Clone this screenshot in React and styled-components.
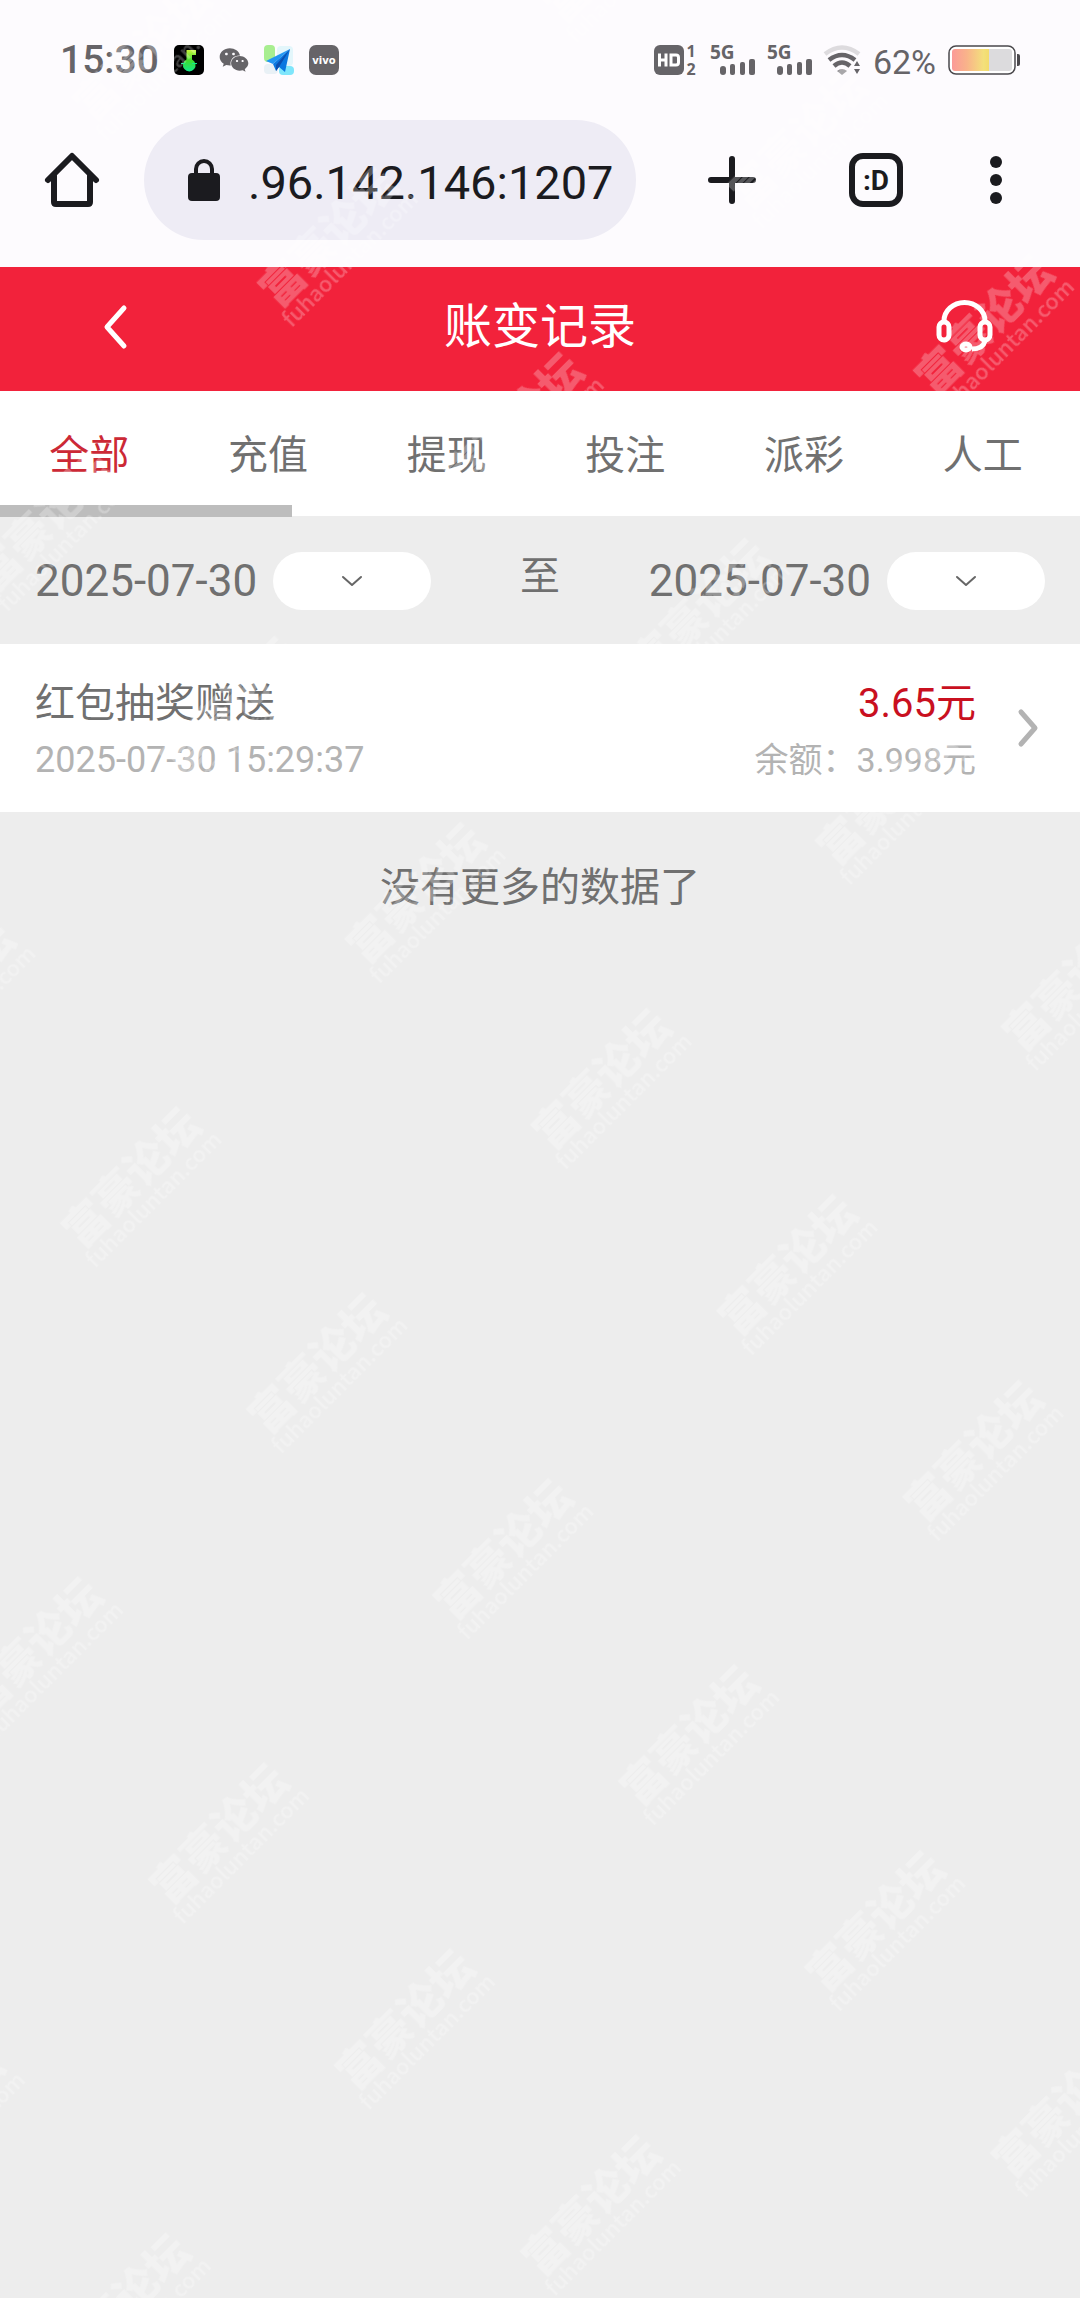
import React, { useState } from 'react';
import styled, { createGlobalStyle } from 'styled-components';
import { FaWeixin } from 'react-icons/fa';

const tabs = ['全部', '充值', '提现', '投注', '派彩', '人工'];

const records = [
    { id: 1, name: '红包抽奖赠送', time: '2025-07-30 15:29:37', amount: '3.65元', balance: '3.998元' },
];

const PlayerIcon = () => (
    <svg width='30' height='30' viewBox='0 0 30 30' aria-hidden='true'>
        <defs>
            <linearGradient id='note' x1='0' y1='0' x2='0' y2='1'>
                <stop offset='0' stopColor='#c8f53c' />
                <stop offset='0.5' stopColor='#3ddc2e' />
                <stop offset='1' stopColor='#12e88c' />
            </linearGradient>
        </defs>
        <rect width='30' height='30' rx='5' fill='#000' />
        <path d='M12.5 5h9.5v5h-4v4.5a6.3 6.3 0 1 1-5.5 0z' fill='url(#note)' />
        <path d='M7 18.5h4M18 18.5h5' stroke='#12e88c' strokeWidth='1' />
    </svg>
)

const PlaneIcon = () => (
    <svg width='30' height='30' viewBox='0 0 30 30' aria-hidden='true'>
        <rect x='0' y='0' width='11' height='17' rx='4' fill='#a8ee90' />
        <rect x='13' y='1' width='16' height='20' rx='4' fill='#e3f6fb' />
        <rect x='0' y='19' width='14' height='10' rx='4' fill='#e9f1f6' />
        <rect x='15' y='21' width='15' height='9' rx='4' fill='#7fe6fb' />
        <path d='M26 4 2 16l7 3z' fill='#2196f3' />
        <path d='M26 4 9 19l3 7 3-4 6 5z' fill='#0b78e0' />
        <path d='M26 4 12 20v6l3-4z' fill='#0a4fb0' />
    </svg>
)

const VivoIcon = () => (
    <svg width='30' height='30' viewBox='0 0 30 30' aria-hidden='true'>
        <rect width='30' height='30' rx='7' fill='#666468' />
        <text x='15' y='19' textAnchor='middle' fontFamily='DejaVu Sans, sans-serif' fontWeight='700' fontSize='10' fill='#fff'>vivo</text>
    </svg>
)

const HdIcon = () => (
    <svg width='44' height='30' viewBox='0 0 44 30' aria-hidden='true' fill='#666468'>
        <rect width='30' height='30' rx='6' />
        <path d='M5.5 8.500v13M12 8.500v13M5.500 15h6.500' stroke='#fff' strokeWidth='3' fill='none' />
        <path d='M17 10h5q2.500 0 2.500 2.500v5q0 2.500-2.500 2.500h-5z' stroke='#fff' strokeWidth='3' fill='none' />
        <text x='37' y='12' textAnchor='middle' fontFamily='Noto Sans, sans-serif' fontWeight='700' fontSize='16'>1</text>
        <text x='37' y='30' textAnchor='middle' fontFamily='Noto Sans, sans-serif' fontWeight='700' fontSize='16'>2</text>
    </svg>
)

const SignalIcon = () => (
    <svg width='45' height='30' viewBox='0 0 45 30' aria-hidden='true' fill='#666468'>
        <text x='0' y='14' fontFamily='Noto Sans, sans-serif' fontWeight='700' fontSize='19'>5G</text>
        <rect x='10' y='21' width='6' height='9' rx='3' />
        <rect x='20' y='19' width='5' height='11' rx='2' />
        <rect x='30' y='17' width='5' height='13' rx='2' />
        <rect x='39' y='14' width='6' height='16' rx='2' />
    </svg>
)

const WifiIcon = () => (
    <svg width='37' height='30' viewBox='0 0 37 30' aria-hidden='true' fill='none'>
        <path d='M1 9Q18 -4 35 9' stroke='#dddbde' strokeWidth='4.500' />
        <path d='M5 15Q18 5 31 15' stroke='#666468' strokeWidth='4.500' />
        <path d='M10 21Q18 14 26 21' stroke='#666468' strokeWidth='4.500' />
        <path d='M13 26q5-4 10 0l-5 4z' fill='#8a888c' />
        <path d='m33 16 3 5h-6zM33 29l3-5h-6z' fill='#666468' />
    </svg>
)

const BatteryIcon = () => (
    <svg width='72' height='30' viewBox='0 0 72 30' aria-hidden='true'>
        <defs>
            <linearGradient id='charge' x1='0' x2='1'>
                <stop offset='0' stopColor='#fb9a98' />
                <stop offset='0.4' stopColor='#f9b38a' />
                <stop offset='0.85' stopColor='#f3e07c' />
                <stop offset='1' stopColor='#f3dc6c' />
            </linearGradient>
        </defs>
        <rect x='1' y='1' width='66' height='28' rx='7' fill='#fff' stroke='#4a484c' strokeWidth='1.500' />
        <path d='M41 4h20q3 0 3 3v16q0 3-3 3h-20z' fill='#dcdbdd' />
        <path d='M41 4H7Q4 4 4 7v16q0 3 3 3h34z' fill='url(#charge)' />
        <path d='M69 9h1q2 0 2 2v8q0 2-2 2h-1z' fill='#4a484c' />
    </svg>
)

const HomeIcon = () => (
    <svg width='54' height='54' viewBox='0 0 54 54' aria-hidden='true' fill='none' stroke='#1b1b1f' strokeWidth='6' strokeLinecap='round' strokeLinejoin='round'>
        <path d='M3 27 27 3l24 24' />
        <path d='M9 23v26q0 2 2 2h32q2 0 2-2V23' />
    </svg>
)

const LockIcon = () => (
    <svg width='32' height='42' viewBox='0 0 32 42' aria-hidden='true'>
        <path d='M8 16V10a8 8 0 0 1 16 0v6' fill='none' stroke='#1b1b1f' strokeWidth='4' />
        <rect y='14' width='32' height='28' rx='4' fill='#1b1b1f' />
    </svg>
)

const PlusIcon = () => (
    <svg width='48' height='48' viewBox='0 0 48 48' aria-hidden='true' stroke='#1b1b1f' strokeWidth='6' strokeLinecap='round'>
        <path d='M24 3v42M3 24h42' />
    </svg>
)

const DotsIcon = () => (
    <svg width='12' height='48' viewBox='0 0 12 48' aria-hidden='true' fill='#1b1b1f'>
        <circle cx='6' cy='6' r='6' />
        <circle cx='6' cy='24' r='6' />
        <circle cx='6' cy='42' r='6' />
    </svg>
)

const BackIcon = () => (
    <svg width='24' height='44' viewBox='0 0 24 44' aria-hidden='true' fill='none' stroke='#fff' strokeWidth='5' strokeLinejoin='round' strokeLinecap='round'>
        <path d='M21 3 4 22l17 19' />
    </svg>
)

const HeadsetIcon = () => (
    <svg width='57' height='54' viewBox='0 0 57 54' aria-hidden='true' fill='none' stroke='#fff' strokeWidth='5'>
        <rect x='3' y='22' width='10' height='18' rx='5' />
        <rect x='44' y='22' width='10' height='18' rx='5' />
        <path d='M8 22v-1a20.500 18.500 0 0 1 41 0v1' />
        <path d='M49 40v1q-2 8-13 8' />
        <ellipse cx='30' cy='47' rx='4' ry='3' />
    </svg>
)

const DownIcon = () => (
    <svg width='20' height='12' viewBox='0 0 20 12' aria-hidden='true' fill='none' stroke='#666' strokeWidth='2' strokeLinecap='round' strokeLinejoin='round'>
        <path d='m1 2 9 8 9-8' />
    </svg>
)

const RightIcon = () => (
    <svg width='20' height='38' viewBox='0 0 20 38' aria-hidden='true' fill='none' stroke='#b3b3b3' strokeWidth='5' strokeLinecap='round' strokeLinejoin='round'>
        <path d='m3 3 14 16L3 35' />
    </svg>
)

// forum mark, repeated on a grid turned by 45 degrees
const Watermark = () => (
    <Overlay aria-hidden='true'>
        <defs>
            <pattern id='mark' x='-201' y='-131' width='402' height='263' patternUnits='userSpaceOnUse' patternTransform='translate(608 1084) rotate(-45)'>
                <text x='200' y='139' textAnchor='middle' fontSize='43' fontWeight='900'>富豪论坛</text>
                <text x='200' y='162' textAnchor='middle' fontSize='22' fontWeight='500'>fuhaoluntan.com</text>
            </pattern>
        </defs>
        <rect width='100%' height='100%' fill='url(#mark)' />
    </Overlay>
)

const DateField = ({ label, value }) => (
    <DateGroup>
        <time dateTime={value}>{value}</time>
        <DateButton type='button' aria-label={label}><DownIcon /></DateButton>
    </DateGroup>
)

const App = () => {
    const [active, setActive] = useState(tabs[0]);

    return (
        <Page>
            <GlobalStyle />
            <Browser>
                <StatusBar>
                    <StatusGroup $gap='15px'>
                        <Clock>15:30</Clock>
                        <PlayerIcon />
                        <FaWeixin size={30} />
                        <PlaneIcon />
                        <VivoIcon />
                    </StatusGroup>
                    <StatusGroup $gap='12px'>
                        <HdIcon />
                        <SignalIcon />
                        <SignalIcon />
                        <WifiIcon />
                        <Percent>62%</Percent>
                        <BatteryIcon />
                    </StatusGroup>
                </StatusBar>
                <Toolbar>
                    <ToolButton type='button' aria-label='主页'><HomeIcon /></ToolButton>
                    <AddressBar>
                        <LockIcon />
                        <Address aria-label='网址' defaultValue='.96.142.146:1207' />
                    </AddressBar>
                    <ToolButton type='button' aria-label='新标签页'><PlusIcon /></ToolButton>
                    <ToolButton type='button' aria-label='标签页'><TabCount>:D</TabCount></ToolButton>
                    <ToolButton type='button' aria-label='菜单' $narrow><DotsIcon /></ToolButton>
                </Toolbar>
            </Browser>

            <Header>
                <HeaderButton type='button' aria-label='返回'><BackIcon /></HeaderButton>
                <h1>账变记录</h1>
                <HeaderButton type='button' aria-label='客服'><HeadsetIcon /></HeaderButton>
            </Header>

            <TabBar>
                {tabs.map(tab => (
                    <Tab key={tab} type='button' $active={tab === active} onClick={() => setActive(tab)}>{tab}</Tab>
                ))}
                <ScrollThumb />
            </TabBar>

            <Filter>
                <DateField label='开始日期' value='2025-07-30' />
                <To>至</To>
                <DateField label='结束日期' value='2025-07-30' />
            </Filter>

            {records.map(record => (
                <Record key={record.id} href='#'>
                    <Column>
                        <Name>{record.name}</Name>
                        <Time>{record.time}</Time>
                    </Column>
                    <Column $end>
                        <Amount>{record.amount}</Amount>
                        <Balance>余额：{record.balance}</Balance>
                    </Column>
                    <RightIcon />
                </Record>
            ))}
            <NoMore>没有更多的数据了</NoMore>
            <Watermark />
        </Page>
    )
}

export default App;

const GlobalStyle = createGlobalStyle`
    * {
        box-sizing: border-box;
    }

    body {
        margin: 0;
        background: #ededed;
        font-family: Roboto, 'Noto Sans CJK SC', sans-serif;
    }

    button, input {
        margin: 0;
        padding: 0;
        border: none;
        background: none;
        font-family: inherit;
        color: inherit;
    }

    button {
        cursor: pointer;
    }

    svg {
        display: block;
        flex-shrink: 0;
        overflow: visible;
    }
`

const Page = styled.div`
    position: relative;
    min-height: 100vh;
    overflow: hidden;
    background: #ededed;
    color: #707070;
`

const Overlay = styled.svg`
    position: absolute;
    inset: 0;
    width: 100%;
    height: 100%;
    fill: #fff;
    opacity: 0.26;
    font-family: 'Noto Sans CJK SC', sans-serif;
    pointer-events: none;
`

const Browser = styled.div`
    padding-bottom: 27px;
    background: #fdfbfe;
    color: #1b1b1f;
`

const StatusBar = styled.div`
    display: flex;
    justify-content: space-between;
    align-items: center;
    height: 120px;
    padding: 0 60px;
    color: #666468;
`

const StatusGroup = styled.div`
    display: flex;
    align-items: center;
    gap: ${({ $gap }) => $gap};
`

const Clock = styled.span`
    font-size: 39px;
    font-weight: 500;
`

const Percent = styled.span`
    padding-top: 4px;
    font-size: 34px;
    line-height: 30px;
`

const Toolbar = styled.div`
    display: flex;
    align-items: center;
    padding-right: 36px;
`

const ToolButton = styled.button`
    display: flex;
    justify-content: center;
    align-items: center;
    flex-shrink: 0;
    width: ${({ $narrow }) => $narrow ? '96px' : '144px'};
    height: 120px;
`

const AddressBar = styled.div`
    display: flex;
    align-items: center;
    flex: 1;
    gap: 28px;
    min-width: 0;
    height: 120px;
    margin-right: 24px;
    padding: 0 12px 0 44px;
    border-radius: 60px;
    background: #eeecf5;
`

const Address = styled.input`
    flex: 1;
    min-width: 0;
    height: 100%;
    padding-top: 4px;
    font-size: 47px;
    outline: none;
`

const TabCount = styled.span`
    display: flex;
    justify-content: center;
    align-items: center;
    width: 54px;
    height: 54px;
    border: 6px solid #1b1b1f;
    border-radius: 14px;
    font-size: 28px;
    font-weight: 700;
`

const Header = styled.header`
    display: flex;
    justify-content: space-between;
    align-items: center;
    height: 124px;
    padding: 0 57px 4px;
    background: #f2223b;
    color: #fff;

    h1 {
        margin: 0;
        font-size: 48px;
        font-weight: 400;
        line-height: 64px;
    }
`

const HeaderButton = styled.button`
    display: flex;
    justify-content: center;
    align-items: center;
    width: 116px;
    height: 100%;
`

const TabBar = styled.nav`
    position: relative;
    display: grid;
    grid-template-columns: repeat(6, 1fr);
    height: 125px;
    padding-right: 8px;
    background: #fff;
`

const Tab = styled.button`
    padding-bottom: 4px;
    font-size: 40px;
    color: ${({ $active }) => $active ? '#cc2936' : '#707070'};
`

const ScrollThumb = styled.div`
    position: absolute;
    left: 0;
    bottom: -1px;
    width: 27%;
    height: 12px;
    background: #bdbdbd;
`

const Filter = styled.div`
    display: flex;
    justify-content: space-between;
    align-items: center;
    padding: 36px 35px 34px;
`

const DateGroup = styled.div`
    display: flex;
    align-items: center;
    gap: 16px;
    font-size: 44px;
    line-height: 58px;
`

const DateButton = styled.button`
    display: flex;
    justify-content: center;
    align-items: center;
    width: 158px;
    height: 58px;
    border-radius: 29px;
    background: #fff;
`

const To = styled.span`
    padding-bottom: 8px;
    font-size: 40px;
    line-height: 50px;
`

const Record = styled.a`
    display: flex;
    align-items: center;
    height: 168px;
    padding: 0 42px 0 35px;
    background: #fff;
    color: inherit;
    text-decoration: none;
`

const Column = styled.div`
    display: flex;
    flex-direction: column;
    flex: ${({ $end }) => $end ? 'none' : '1'};
    align-items: ${({ $end }) => $end ? 'flex-end' : 'flex-start'};
    margin-right: ${({ $end }) => $end ? '42px' : '0'};
    padding-top: 8px;
    line-height: 56px;
`

const Name = styled.span`
    font-size: 40px;
`

const Time = styled.span`
    font-size: 36px;
    color: #b3b3b3;
`

const Amount = styled.span`
    font-size: 40px;
    color: #c9101f;
`

const Balance = styled.span`
    font-size: 34px;
    color: #b3b3b3;
`

const NoMore = styled.p`
    margin: 0;
    padding: 48px 0;
    font-size: 40px;
    line-height: 56px;
    text-align: center;
`
